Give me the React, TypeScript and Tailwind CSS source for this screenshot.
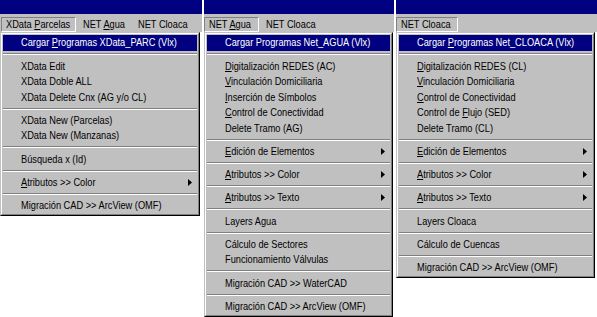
import React from "react";

type Row = { t: string; u?: number; sub?: boolean; hot?: boolean } | null;
type Top = { t: string; u?: number; open?: boolean; w: number; ml: number };

const P1_TOP: Top[] = [
  { t: "XData Parcelas", u: 6, open: true, w: 75, ml: 1 },
  { t: "NET Agua", u: 4, w: 55, ml: 2 },
  { t: "NET Cloaca", w: 62, ml: 0 },
];
const P2_TOP: Top[] = [
  { t: "NET Agua", u: 4, open: true, w: 55, ml: 0 },
  { t: "NET Cloaca", w: 62, ml: 2 },
];
const P3_TOP: Top[] = [{ t: "NET Cloaca", open: true, w: 62, ml: 0 }];

const P1_ROWS: Row[] = [
  { t: "Cargar Programas XData_PARC (Vlx)", u: 7, hot: true },
  null,
  { t: "XData Edit" },
  { t: "XData Doble ALL" },
  { t: "XData Delete Cnx (AG y/o CL)" },
  null,
  { t: "XData New (Parcelas)" },
  { t: "XData New (Manzanas)" },
  null,
  { t: "Búsqueda x (Id)" },
  null,
  { t: "Atributos >> Color", u: 0, sub: true },
  null,
  { t: "Migración CAD >> ArcView (OMF)" },
];

const P2_ROWS: Row[] = [
  { t: "Cargar Programas Net_AGUA (Vlx)", hot: true },
  null,
  { t: "Digitalización REDES (AC)", u: 0 },
  { t: "Vinculación Domiciliaria", u: 0 },
  { t: "Inserción de Símbolos", u: 0 },
  { t: "Control de Conectividad", u: 0 },
  { t: "Delete Tramo (AG)" },
  null,
  { t: "Edición de Elementos", u: 0, sub: true },
  null,
  { t: "Atributos >> Color", u: 0, sub: true },
  null,
  { t: "Atributos >> Texto", u: 0, sub: true },
  null,
  { t: "Layers Agua" },
  null,
  { t: "Cálculo de Sectores" },
  { t: "Funcionamiento Válvulas" },
  null,
  { t: "Migración CAD >> WaterCAD" },
  null,
  { t: "Migración CAD >> ArcView (OMF)" },
];

const P3_ROWS: Row[] = [
  { t: "Cargar Programas Net_CLOACA (Vlx)", u: 7, hot: true },
  null,
  { t: "Digitalización REDES (CL)", u: 0 },
  { t: "Vinculación Domiciliaria", u: 0 },
  { t: "Control de Conectividad", u: 0 },
  { t: "Control de Flujo (SED)", u: 11 },
  { t: "Delete Tramo (CL)" },
  null,
  { t: "Edición de Elementos", u: 0, sub: true },
  null,
  { t: "Atributos >> Color", u: 0, sub: true },
  null,
  { t: "Atributos >> Texto", u: 0, sub: true },
  null,
  { t: "Layers Cloaca" },
  null,
  { t: "Cálculo de Cuencas" },
  null,
  { t: "Migración CAD >> ArcView (OMF)" },
];

// MS Sans Serif is much narrower than Arial, so squeeze the glyphs horizontally
function Label({ t, u }: { t: string; u?: number }) {
  return (
    <span className="inline-block origin-left scale-x-[0.84] whitespace-pre">
      {u === undefined ? (
        t
      ) : (
        <>
          {t.slice(0, u)}
          <span className="underline underline-offset-[1px]">{t[u]}</span>
          {t.slice(u + 1)}
        </>
      )}
    </span>
  );
}

function Panel({ width, dropW, top, rows }: { width: number; dropW: number; top: Top[]; rows: Row[] }) {
  return (
    <div className="flex shrink-0 flex-col" style={{ width }}>
      <div className="h-[14px] bg-[#000080]" />
      <div className="flex h-[18px] items-end bg-[#c0c0c0]">
        {top.map((m) => (
          <div
            key={m.t}
            style={{ width: m.w, marginLeft: m.ml }}
            className={
              "flex h-[15px] shrink-0 items-center overflow-hidden " +
              (m.open
                ? "border border-b-white border-l-[#808080] border-r-white border-t-[#808080] pl-[4px]"
                : "pl-[5px]")
            }
          >
            <Label t={m.t} u={m.u} />
          </div>
        ))}
      </div>
      <div
        className="border border-b-black border-l-[#c0c0c0] border-r-black border-t-[#c0c0c0] bg-[#c0c0c0]"
        style={{ width: dropW }}
      >
        <div className="border border-b-[#808080] border-l-white border-r-[#808080] border-t-white p-px">
          {rows.map((r, i) =>
            r === null ? (
              <div key={i} className="flex h-[7.75px] flex-col justify-center">
                <div className="border-t border-b border-t-[#808080] border-b-white" />
              </div>
            ) : (
              <div
                key={i}
                className={
                  "flex h-[15.5px] items-center pl-[18px] pr-[5px] " +
                  (r.hot ? "bg-[#000080] text-white" : "")
                }
              >
                <div className="min-w-0 flex-1 overflow-hidden">
                  <Label t={r.t} u={r.u} />
                </div>
                {r.sub && (
                  <svg className="shrink-0" width="4" height="7" viewBox="0 0 4 7">
                    <polygon points="0,0 4,3.5 0,7" fill="black" />
                  </svg>
                )}
              </div>
            )
          )}
        </div>
      </div>
    </div>
  );
}

export default function App() {
  return (
    <div className="flex h-[317px] w-[597px] gap-[2px] overflow-hidden bg-white font-['Liberation_Sans',Arial,sans-serif] text-[11px] leading-none text-black">
      <Panel width={202} dropW={200} top={P1_TOP} rows={P1_ROWS} />
      <Panel width={190} dropW={189} top={P2_TOP} rows={P2_ROWS} />
      <Panel width={201} dropW={199} top={P3_TOP} rows={P3_ROWS} />
    </div>
  );
}
